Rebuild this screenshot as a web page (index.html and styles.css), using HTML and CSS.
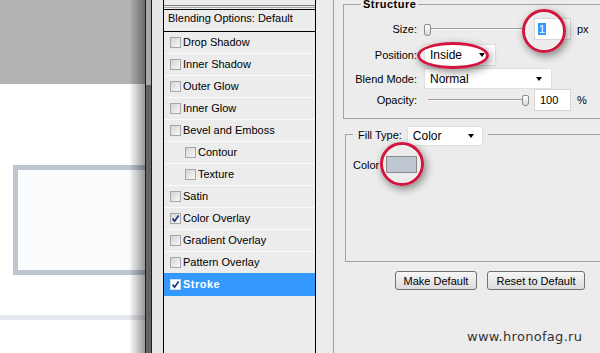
FILE: index.html
```html
<!DOCTYPE html>
<html>
<head>
<meta charset="utf-8">
<link rel="stylesheet" href="styles.css">
</head>
<body>
<div class="page">
  <div class="canvas">
    <div class="canvas-top"></div>
    <div class="canvas-rect"></div>
    <div class="canvas-line"></div>
  </div>
  <div class="scrollbar"></div>
  <div class="gutter"></div>
  <div class="styles-list">
    <div class="list-stub"></div>
    <div class="list-stub2"></div>
    <div class="list-header">Blending Options: Default</div>
    <div class="row"><span class="cb"></span>Drop Shadow</div>
    <div class="row"><span class="cb"></span>Inner Shadow</div>
    <div class="row"><span class="cb"></span>Outer Glow</div>
    <div class="row"><span class="cb"></span>Inner Glow</div>
    <div class="row"><span class="cb"></span>Bevel and Emboss</div>
    <div class="row sub"><span class="cb"></span>Contour</div>
    <div class="row sub"><span class="cb"></span>Texture</div>
    <div class="row"><span class="cb"></span>Satin</div>
    <div class="row"><span class="cb"><svg width="9" height="9" viewBox="0 0 9 9"><path d="M1.5 4.6 L3.6 7.2 L7.6 1.4" fill="none" stroke="#1d3474" stroke-width="1.7"/></svg></span>Color Overlay</div>
    <div class="row"><span class="cb"></span>Gradient Overlay</div>
    <div class="row"><span class="cb"></span>Pattern Overlay</div>
    <div class="row active"><span class="cb cb-on"><svg width="9" height="9" viewBox="0 0 9 9"><path d="M1.5 4.6 L3.6 7.2 L7.6 1.4" fill="none" stroke="#1d3474" stroke-width="1.7"/></svg></span>Stroke</div>
  </div>
  <div class="panel">
    <div class="panel-inner">
      <fieldset class="group structure">
        <legend class="legend-bold">Structure</legend>
        <div class="frow r1">
          <span class="flabel">Size:</span>
          <div class="slider"><div class="track"></div><div class="thumb thumb-left"></div></div>
          <div class="num num-size"><span class="sel">1</span></div>
          <span class="unit">px</span>
        </div>
        <div class="frow r2">
          <span class="flabel">Position:</span>
          <div class="dd dd-pos">Inside<span class="arrow arrow-pos"></span></div>
        </div>
        <div class="frow r3">
          <span class="flabel">Blend Mode:</span>
          <div class="dd dd-blend">Normal<span class="arrow arrow-blend"></span></div>
        </div>
        <div class="frow r4">
          <span class="flabel">Opacity:</span>
          <div class="slider"><div class="track"></div><div class="thumb thumb-right"></div></div>
          <div class="num num-op">100</div>
          <span class="unit">%</span>
        </div>
      </fieldset>
      <fieldset class="group fill">
        <legend class="legend-fill"><span>Fill Type:</span><div class="dd dd-fill">Color<span class="arrow arrow-fill"></span></div></legend>
        <div class="fill-body"><span>Color</span><div class="swatch"></div></div>
      </fieldset>
      <div class="buttons">
        <button class="btn btn-make">Make Default</button>
        <button class="btn btn-reset">Reset to Default</button>
      </div>
      <div class="watermark">www.hronofag.ru</div>
    </div>
  </div>
  <div class="mark mark-size"></div>
  <div class="mark mark-pos"></div>
  <div class="mark mark-color"></div>
</div>
</body>
</html>
```

FILE: styles.css
```css
html, body {
  margin: 0;
  padding: 0;
  background: #ececec;
}
body {
  font-family: "Liberation Sans", Arial, sans-serif;
  font-size: 11px;
  color: #000;
}
.page {
  display: flex;
  width: 600px;
  height: 353px;
  overflow: hidden;
  position: relative;
  background: #ececec;
}

/* canvas */
.canvas {
  flex: none;
  width: 145px;
  height: 353px;
  position: relative;
  overflow: hidden;
  background: #fff;
}
.canvas-top {
  height: 84px;
  background: #b3b3b3;
}
.canvas-rect {
  margin: 81px 0 0 13px;
  width: 160px;
  height: 110px;
  box-sizing: border-box;
  border: 5px solid #bdc5d0;
  background: #fbfcfd;
}
.canvas-line {
  margin-top: 40px;
  height: 5px;
  background: #e5e8ec;
}
.canvas::after {
  content: "";
  position: absolute;
  top: 0;
  right: 0;
  bottom: 0;
  width: 16px;
  background: linear-gradient(to right, rgba(0,0,0,0), rgba(0,0,0,0.4));
}

.scrollbar {
  flex: none;
  width: 5px;
  border-left: 1px solid #1c1c1c;
  border-right: 1px solid #1c1c1c;
  background: linear-gradient(#a9a9a9 0, #a9a9a9 85px, #646464 85px);
}
.gutter {
  flex: none;
  width: 11px;
  background: #e7e7e7;
}

/* styles list */
.styles-list {
  flex: none;
  width: 151px;
  border-left: 1px solid #000;
  border-right: 1px solid #000;
  background: #ececec;
}
.list-stub {
  height: 5px;
  border-bottom: 1px solid #7a7a7a;
  margin-bottom: 1px;
}
.list-stub2 {
  border-top: 1px solid #a8a8a8;
  margin-bottom: 1px;
}
.list-header {
  border-top: 1px solid #000;
  border-bottom: 1px solid #000;
  height: 21px;
  line-height: 17px;
  padding-left: 4px;
}
.row {
  height: 21px;
  line-height: 21px;
  border-bottom: 1px solid #fafafa;
  display: flex;
  align-items: center;
  padding-left: 6px;
  white-space: nowrap;
}
.row.sub {
  padding-left: 21px;
}
.row.active {
  background: #3399ff;
  color: #fff;
  font-weight: bold;
  letter-spacing: 0.5px;
  border-bottom-color: #3399ff;
  box-shadow: 0 -1px 0 #3399ff;
}
.cb {
  flex: none;
  width: 9px;
  height: 9px;
  border: 1px solid #a6a6a6;
  background: linear-gradient(135deg, #d4d4d4, #f8f8f8);
  margin-right: 2px;
  display: flex;
}
.cb-on {
  background: #fff;
  border-color: #c8dcf5;
}

/* right panel */
.panel {
  flex: none;
  width: 300px;
  padding-left: 17px;
}
.panel-inner {
  border-left: 1px solid #a0a0a0;
  padding-left: 9px;
  height: 353px;
  width: 290px;
  box-sizing: border-box;
}
fieldset.group {
  margin: 0;
  padding: 0;
  border: 1px solid #a3a3a3;
  min-width: 0;
}
fieldset.structure {
  margin-top: 0;
  padding: 0 0 7px 0;
}
.legend-bold {
  margin-left: 17px;
  padding: 0 2px;
  font-weight: bold;
  line-height: 9px;
  letter-spacing: 0.5px;
}
.frow {
  display: flex;
  align-items: center;
  height: 22px;
  position: relative;
}
.r1 { margin-top: 9px; }
.r2 { margin-top: 4px; }
.r3 { margin-top: 2px; height: 21px; }
.r4 { margin-top: 0; }
.flabel {
  flex: none;
  width: 73px;
  margin-right: 7px;
  text-align: right;
}
.slider {
  flex: none;
  position: relative;
  width: 105px;
  height: 22px;
  padding: 0 4px;
  box-sizing: border-box;
  display: flex;
  align-items: center;
}
.track {
  flex: 1;
  height: 1px;
  background: #9c9c9c;
  border-bottom: 1px solid #fbfbfb;
}
.thumb {
  position: absolute;
  top: 6px;
  width: 7px;
  height: 12px;
  box-sizing: border-box;
  border: 1px solid #8c8c8c;
  border-radius: 2px 2px 3px 3px;
  background: linear-gradient(#ffffff, #d8d8d8);
}
.thumb-left { left: 0; }
.thumb-right { left: 98px; top: 6px; height: 11px; }
.num {
  flex: none;
  margin-left: 5px;
  width: 37px;
  height: 22px;
  box-sizing: border-box;
  background: #fff;
  border: 1px solid #d6d6d6;
  display: flex;
  align-items: center;
}
.num-size { padding-left: 3px; }
.num-op { padding-left: 5px; }
.sel {
  background: #3399ff;
  color: #fff;
  padding: 0 1px;
  line-height: 12px;
}
.unit {
  margin-left: 6px;
}
.dd {
  flex: none;
  background: #fff;
  border: 1px solid #e0e0e0;
  height: 22px;
  box-sizing: border-box;
  display: flex;
  align-items: center;
  padding-left: 5px;
  font-size: 12px;
}
.dd-pos { width: 72px; }
.dd-blend { width: 128px; height: 21px; }
.arrow {
  margin-left: auto;
  width: 0;
  height: 0;
  border-left: 3.5px solid transparent;
  border-right: 3.5px solid transparent;
  border-top: 4px solid #000;
}
.arrow-pos { margin-right: 10px; }
.arrow-blend { margin-right: 9px; }
.arrow-fill { margin-right: 8px; }

fieldset.fill {
  margin: 7px 0 0 2px;
  padding: 0 0 88px 0;
}
.legend-fill {
  display: flex;
  align-items: flex-start;
  height: 17px;
  margin-left: 7px;
  padding: 0 5px;
}
.legend-fill span {
  line-height: 17px;
  padding-top: 1px;
}
.dd-fill {
  width: 76px;
  height: 20px;
  margin-left: 5px;
  padding-left: 5px;
}
.fill-body {
  display: flex;
  align-items: center;
  margin-top: 13px;
  padding-left: 7px;
  height: 17px;
}
.swatch {
  margin-left: 7px;
  width: 31px;
  height: 17px;
  box-sizing: border-box;
  border: 1px solid #8a8a8a;
  background: #bec7d2;
}

.buttons {
  display: flex;
  gap: 10px;
  margin: 9px 0 0 52px;
}
.btn {
  height: 19px;
  padding: 0;
  font-family: "Liberation Sans", Arial, sans-serif;
  font-size: 11px;
  color: #000;
  border: 1px solid #707070;
  border-radius: 3px;
  background: linear-gradient(#f6f6f6, #dcdcdc);
  text-align: center;
}
.btn-make { width: 82px; }
.btn-reset { width: 98px; }

.watermark {
  margin: 39px 0 0 124px;
  font-family: "DejaVu Sans", sans-serif;
  font-size: 13px;
  line-height: 16px;
  letter-spacing: 0.3px;
  color: #343434;
  white-space: nowrap;
}

/* annotation marks */
.mark {
  position: absolute;
  box-sizing: border-box;
  border: 3px solid #d3163f;
  border-radius: 50%;
  box-shadow: inset 0 0 0 1px rgba(255,255,255,0.7), 2px 3px 8px rgba(0,0,0,0.45);
}
.mark-size {
  left: 522px;
  top: 9px;
  width: 44px;
  height: 44px;
}
.mark-pos {
  left: 417px;
  top: 42px;
  width: 72px;
  height: 27px;
}
.mark-color {
  left: 380px;
  top: 142px;
  width: 44px;
  height: 44px;
}
```
